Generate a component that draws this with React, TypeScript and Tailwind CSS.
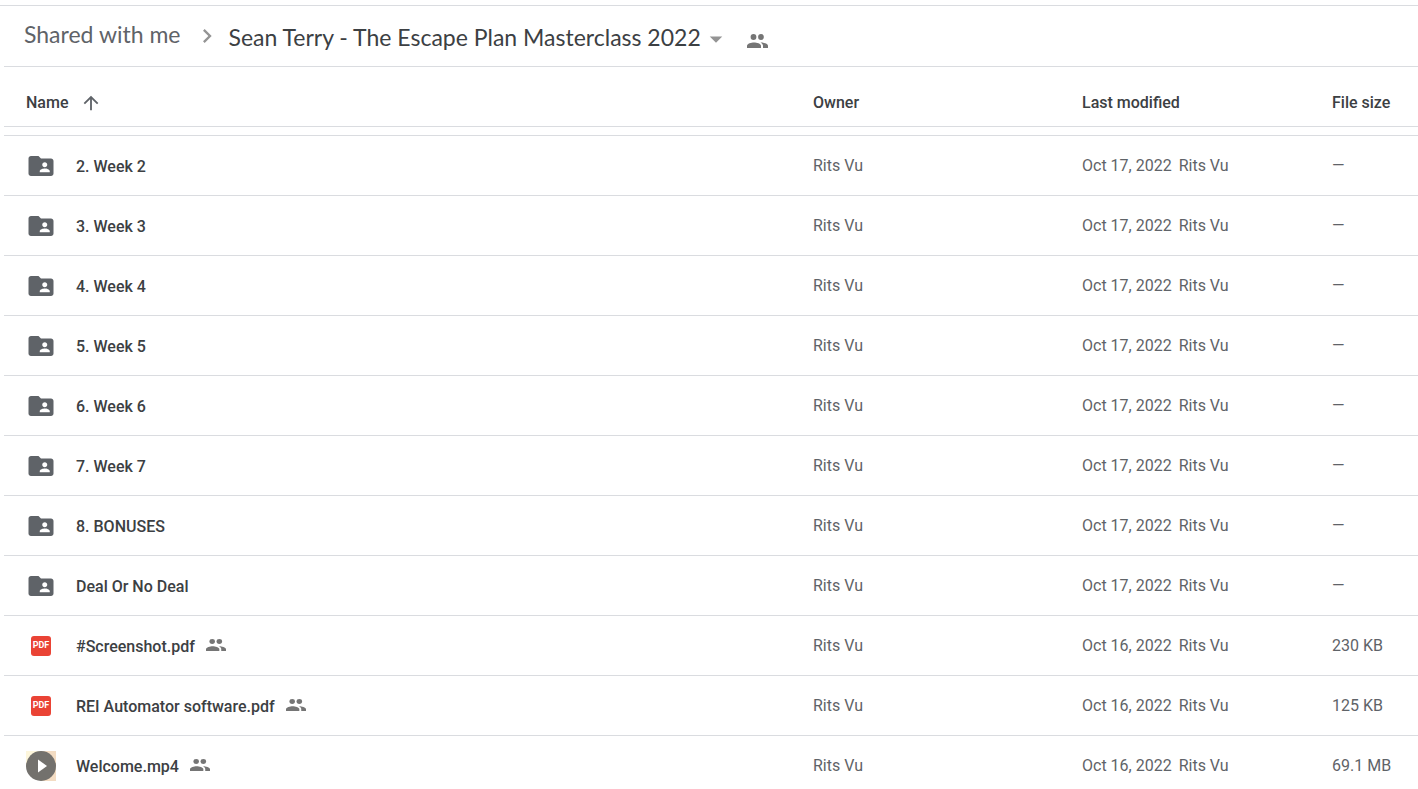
import { MdArrowDropDown, MdArrowUpward, MdChevronRight, MdFolderShared } from "react-icons/md";

type FileKind = "folder" | "pdf" | "video";

type DriveItem = {
  name: string;
  kind: FileKind;
  modified: string;
  size: string;
};

const items: DriveItem[] = [
  { name: "2. Week 2", kind: "folder", modified: "Oct 17, 2022", size: "—" },
  { name: "3. Week 3", kind: "folder", modified: "Oct 17, 2022", size: "—" },
  { name: "4. Week 4", kind: "folder", modified: "Oct 17, 2022", size: "—" },
  { name: "5. Week 5", kind: "folder", modified: "Oct 17, 2022", size: "—" },
  { name: "6. Week 6", kind: "folder", modified: "Oct 17, 2022", size: "—" },
  { name: "7. Week 7", kind: "folder", modified: "Oct 17, 2022", size: "—" },
  { name: "8. BONUSES", kind: "folder", modified: "Oct 17, 2022", size: "—" },
  { name: "Deal Or No Deal", kind: "folder", modified: "Oct 17, 2022", size: "—" },
  { name: "#Screenshot.pdf", kind: "pdf", modified: "Oct 16, 2022", size: "230 KB" },
  { name: "REI Automator software.pdf", kind: "pdf", modified: "Oct 16, 2022", size: "125 KB" },
  { name: "Welcome.mp4", kind: "video", modified: "Oct 16, 2022", size: "69.1 MB" },
];

function PeopleIcon({ className }: { className: string }) {
  return (
    <svg
      viewBox="0 0 21 14"
      preserveAspectRatio="none"
      fill="currentColor"
      className={className}
      role="img"
      aria-label="Shared"
    >
      <circle cx="6.500" cy="3" r="2.900" />
      <path d="M0 14v-2.200C0 9.600 4.300 8.400 7 8.400s7 1.200 7 3.400V14z" />
      <circle cx="14" cy="3" r="2.900" />
      <path d="M13.500 8.400c1.600.900 2.500 2 2.500 3.400V14h5v-2.200c0-2.200-4.400-3.400-7.500-3.400z" />
    </svg>
  );
}

function PdfIcon() {
  return (
    <span className="flex h-5 w-5 items-center justify-center rounded-[3px] bg-[#ea4335] text-[9px] leading-none font-bold text-white">
      PDF
    </span>
  );
}

function VideoIcon() {
  return (
    <svg viewBox="0 0 30 30" className="h-[30px] w-[30px]" aria-hidden="true">
      <path d="M0 0h15v15H0z" fill="#fdf6dc" />
      <path d="M15 0h15v30H15z" fill="#f3dcc3" />
      <circle cx="15" cy="15" r="15" fill="#73716d" />
      <path d="M12 8.500v13l9-6.500z" fill="#fff" />
    </svg>
  );
}

function FileIcon({ kind }: { kind: FileKind }) {
  if (kind === "pdf") return <PdfIcon />;
  if (kind === "video") return <VideoIcon />;
  return <MdFolderShared className="h-[30px] w-[30px] text-[#5f6368]" />;
}

function Breadcrumb() {
  return (
    <nav
      aria-label="Breadcrumb"
      className="flex h-[61px] shrink-0 items-center border-t border-[#dadce0] pl-6 font-['Lato',sans-serif] text-[23px] leading-7"
    >
      <a href="#shared" className="pb-1 text-[#5f6368]">
        Shared with me
      </a>
      <MdChevronRight className="mr-2 ml-3 h-7 w-7 text-[#949494]" />
      <button type="button" className="flex items-center pt-0.5 text-[#3c4043]">
        Sean Terry - The Escape Plan Masterclass 2022
        <MdArrowDropDown className="mt-1 h-[30px] w-[30px] text-[#949494]" />
      </button>
      <button type="button" aria-label="Manage access" className="ml-4 pt-2.5">
        <PeopleIcon className="h-3.5 w-[21px] text-[#757575]" />
      </button>
    </nav>
  );
}

export default function App() {
  return (
    <div className="flex h-screen flex-col overflow-hidden bg-white pt-[5px] font-['Roboto',sans-serif] text-base">
      <Breadcrumb />
      <main className="ml-1 border-t border-[#dadce0]">
        <table className="w-full table-fixed border-separate border-spacing-0 text-left">
          <thead>
            <tr className="h-[60px] text-[#3c4043] *:border-b *:border-[#dadce0] *:pt-3 *:font-medium">
              <th scope="col" className="pl-[22px]">
                <button type="button" className="flex items-center gap-3">
                  Name
                  <MdArrowUpward className="h-[22px] w-[22px] text-[#5f6368]" />
                </button>
              </th>
              <th scope="col" className="w-[269px]">Owner</th>
              <th scope="col" className="w-[250px]">Last modified</th>
              <th scope="col" className="w-[86px]">File size</th>
            </tr>
          </thead>
          <tbody>
            {/* bottom edge of the row scrolled under the header */}
            <tr aria-hidden="true">
              <td colSpan={4} className="h-[9px] border-b border-[#dadce0]" />
            </tr>
            {items.map((item) => (
              <tr key={item.name} className="h-[60px] text-[#5f6368] *:border-b *:border-[#dadce0]">
                <td className="pl-[22px]">
                  <div className="flex items-center">
                    <span className="flex w-[30px] justify-center">
                      <FileIcon kind={item.kind} />
                    </span>
                    <span className="ml-5 pt-0.5 font-medium text-[#3c4043]">{item.name}</span>
                    {item.kind !== "folder" && <PeopleIcon className="mb-0.5 ml-[11px] h-3 w-5 text-[#757575]" />}
                  </div>
                </td>
                <td>Rits Vu</td>
                <td>
                  {item.modified}
                  <span className="ml-[7px]">Rits Vu</span>
                </td>
                <td>{item.size}</td>
              </tr>
            ))}
          </tbody>
        </table>
      </main>
    </div>
  );
}
